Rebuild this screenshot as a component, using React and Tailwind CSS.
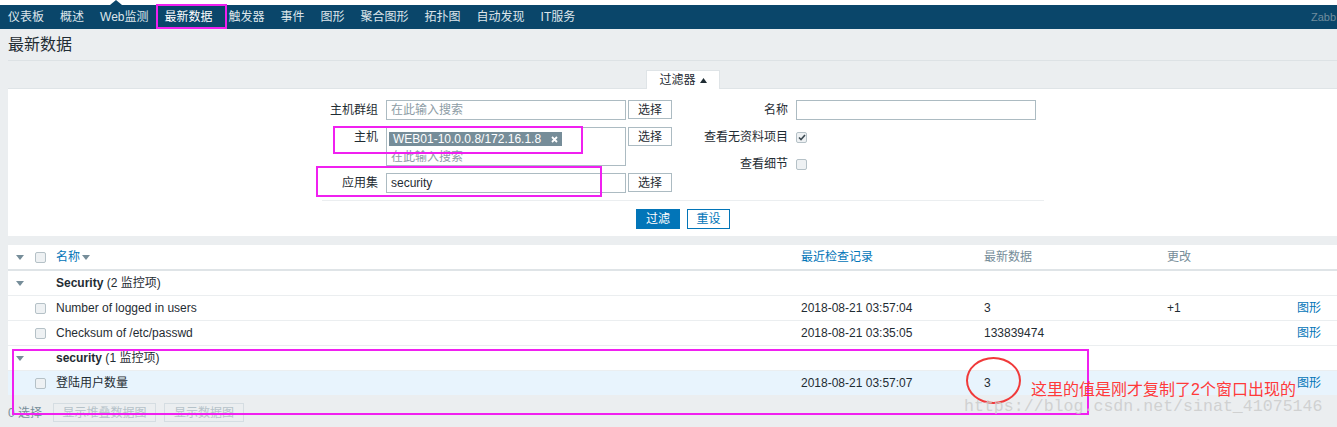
import React from "react";

const font = "font-['Liberation_Sans','Noto_Sans_CJK_SC',sans-serif]";
const cols = "grid grid-cols-[27px_21px_745px_183px_183px_130px_1fr] items-center";

const navItems = ["仪表板", "概述", "Web监测", "最新数据", "触发器", "事件", "图形", "聚合图形", "拓扑图", "自动发现", "IT服务"];

function Caret({ className = "" }) {
  return (
    <svg width="8" height="5" viewBox="0 0 8 5" className={className}>
      <path d="M0 0 L8 0 L4 5 Z" fill="#768d99" />
    </svg>
  );
}

function Checkbox({ checked = false }) {
  return (
    <span className="flex h-[11px] w-[11px] items-center justify-center rounded-[2px] border border-[#b5c1c7] bg-[#eef1f3]">
      {checked ? (
        <svg width="8" height="7" viewBox="0 0 8 7">
          <path d="M1 3.5 L3 5.5 L7 1" stroke="#3d4a52" strokeWidth="1.6" fill="none" />
        </svg>
      ) : null}
    </span>
  );
}

function SelectButton() {
  return (
    <button className="ml-[2px] h-[19px] w-[44px] border border-[#acbbc2] bg-white text-[12px] leading-none text-[#1f2c33]">
      选择
    </button>
  );
}

function ItemRow({ name, time, value, change, highlight }) {
  return (
    <div className={`${cols} h-[25px] border-b border-[#ebeef0] ${highlight ? "bg-[#e8f4fd]" : ""}`}>
      <span />
      <Checkbox />
      <span>{name}</span>
      <span>{time}</span>
      <span>{value}</span>
      <span>{change}</span>
      <span className="text-[#0275b8]">图形</span>
    </div>
  );
}

function GroupRow({ name, count }) {
  return (
    <div className={`${cols} h-[25px] border-b border-[#ebeef0]`}>
      <Caret className="ml-2" />
      <span />
      <span>
        <b>{name}</b> ({count} 监控项)
      </span>
    </div>
  );
}

export default function App() {
  return (
    <div className={`relative h-[427px] w-[1337px] overflow-hidden bg-[#ebeef0] text-[12px] text-[#1f2c33] ${font}`}>
      {/* top strip */}
      <div className="relative h-[5px] bg-white">
        <span className="absolute bottom-0 left-[110px] h-0 w-0 border-b-[5px] border-l-[6px] border-r-[6px] border-b-[#0a466a] border-l-transparent border-r-transparent" />
      </div>
      <nav className="flex h-[24px] items-center overflow-hidden bg-[#0a466a]">
        {navItems.map((item) => (
          <span
            key={item}
            className={`relative flex h-full items-center whitespace-nowrap px-2 ${
              item === "最新数据" ? "text-white" : "text-[#dde5ea]"
            }`}
          >
            {item}
            {item === "最新数据" ? <span className="absolute bottom-0 left-2 right-2 h-[2px] bg-[#6fa8d0]" /> : null}
          </span>
        ))}
        <span className="flex-1" />
        <span className="whitespace-nowrap pr-px text-[11px] text-[#6f8d9e]">Zabb</span>
      </nav>

      {/* title */}
      <div className="mx-2 mr-0 h-[32px] border-b border-[#dde2e5] pt-[4px] text-[16px] leading-[24px]">最新数据</div>

      {/* filter tab */}
      <div className="ml-[322px] mt-[9px] flex w-[722px] justify-center">
        <div className="relative z-10 -mb-px flex h-[19px] w-[74px] items-center justify-center gap-1 border border-b-0 border-[#dfe4e7] bg-white">
          过滤器
          <svg width="7" height="5" viewBox="0 0 7 5">
            <path d="M0 5 L7 5 L3.5 0 Z" fill="#1f2c33" />
          </svg>
        </div>
      </div>

      {/* filter panel */}
      <div className="ml-2 border-t border-[#dfe4e7] bg-white pb-[7px] pt-[11px]">
        <div className="ml-[292px] flex items-start">
          <div className="flex flex-col gap-[7px]">
            <div className="flex items-start">
              <span className="w-[86px] pr-2 text-right leading-[20px]">主机群组</span>
              <div className="flex h-[20px] w-[240px] items-center border border-[#acbbc2] px-[4px] text-[#8d9ca5]">在此输入搜索</div>
              <SelectButton />
            </div>
            <div className="flex items-start">
              <span className="w-[86px] pr-2 text-right leading-[20px]">主机</span>
              <div className="h-[39px] w-[240px] border border-[#acbbc2] px-[2px] pt-[2px]">
                <span className="inline-flex h-[14px] items-center gap-[10px] bg-[#768d99] px-[4px] leading-none text-white">
                  WEB01-10.0.0.8/172.16.1.8
                  <svg width="7" height="7" viewBox="0 0 7 7">
                    <path d="M1 1 L6 6 M6 1 L1 6" stroke="white" strokeWidth="1.8" />
                  </svg>
                </span>
                <div className="px-[2px] leading-[18px] text-[#8d9ca5]">在此输入搜索</div>
              </div>
              <SelectButton />
            </div>
            <div className="flex items-start">
              <span className="w-[86px] pr-2 text-right leading-[20px]">应用集</span>
              <div className="flex h-[20px] w-[240px] items-center border border-[#acbbc2] px-[4px]">security</div>
              <SelectButton />
            </div>
          </div>
          <div className="flex flex-col gap-[7px]">
            <div className="flex items-start">
              <span className="w-[124px] pr-2 text-right leading-[20px]">名称</span>
              <div className="h-[20px] w-[240px] border border-[#acbbc2]" />
            </div>
            <div className="flex h-[20px] items-center">
              <span className="w-[124px] pr-2 text-right">查看无资料项目</span>
              <Checkbox checked />
            </div>
            <div className="flex h-[20px] items-center">
              <span className="w-[124px] pr-2 text-right">查看细节</span>
              <Checkbox />
            </div>
          </div>
        </div>
        <div className="ml-[314px] mt-[7px] flex w-[722px] justify-center gap-[7px] border-t border-[#ebeef0] pt-[8px]">
          <button className="h-[20px] w-[44px] border border-[#0275b8] bg-[#0275b8] text-[12px] text-white">过滤</button>
          <button className="h-[20px] w-[43px] border border-[#0275b8] bg-white text-[12px] text-[#0275b8]">重设</button>
        </div>
      </div>

      {/* table */}
      <div className="ml-2 mt-[9px] bg-white">
        <div className={`${cols} h-[26px] border-b-2 border-[#dfe4e7]`}>
          <Caret className="ml-2" />
          <Checkbox />
          <span className="flex items-center gap-[2px] text-[#0275b8]">
            名称
            <Caret />
          </span>
          <span className="text-[#0275b8]">最近检查记录</span>
          <span className="text-[#768d99]">最新数据</span>
          <span className="text-[#768d99]">更改</span>
          <span />
        </div>
        <GroupRow name="Security" count="2" />
        <ItemRow name="Number of logged in users" time="2018-08-21 03:57:04" value="3" change="+1" />
        <ItemRow name="Checksum of /etc/passwd" time="2018-08-21 03:35:05" value="133839474" change="" />
        <GroupRow name="security" count="1" />
        <ItemRow name="登陆用户数量" time="2018-08-21 03:57:07" value="3" change="" highlight />
      </div>

      {/* footer actions */}
      <div className="flex h-[33px] items-center px-2 text-[#768d99]">
        <span className="w-[45px]">0 选择</span>
        <button className="h-[19px] w-[103px] border border-[#d5dde2] text-[12px] text-[#b5c2c9]">显示堆叠数据图</button>
        <button className="ml-[8px] h-[19px] w-[80px] border border-[#d5dde2] text-[12px] text-[#b5c2c9]">显示数据图</button>
      </div>

      {/* annotations */}
      <div className="absolute left-[156px] top-[4px] h-[25px] w-[71px] border-2 border-[#f020f0]" />
      <div className="absolute left-[333px] top-[126px] h-[28px] w-[250px] border-2 border-[#f020f0]" />
      <div className="absolute left-[316px] top-[166px] h-[31px] w-[286px] border-2 border-[#f020f0]" />
      <div className="absolute left-[12px] top-[349px] h-[66px] w-[1077px] border-2 border-[#f020f0]" />
      <div className="absolute left-[966px] top-[357px] h-[47px] w-[55px] rounded-[50%] border-2 border-[#f03a3a]" />
      <div className="absolute left-[1031px] top-[382px] text-[16px] leading-[16px] text-[#ff3a3a]">这里的值是刚才复制了2个窗口出现的</div>
      <div className="absolute left-[964px] top-[397px] font-['Liberation_Mono',monospace] text-[16.6px] leading-[20px] text-[#c9c9c9]/80">
        https://blog.csdn.net/sinat_41075146
      </div>
    </div>
  );
}
